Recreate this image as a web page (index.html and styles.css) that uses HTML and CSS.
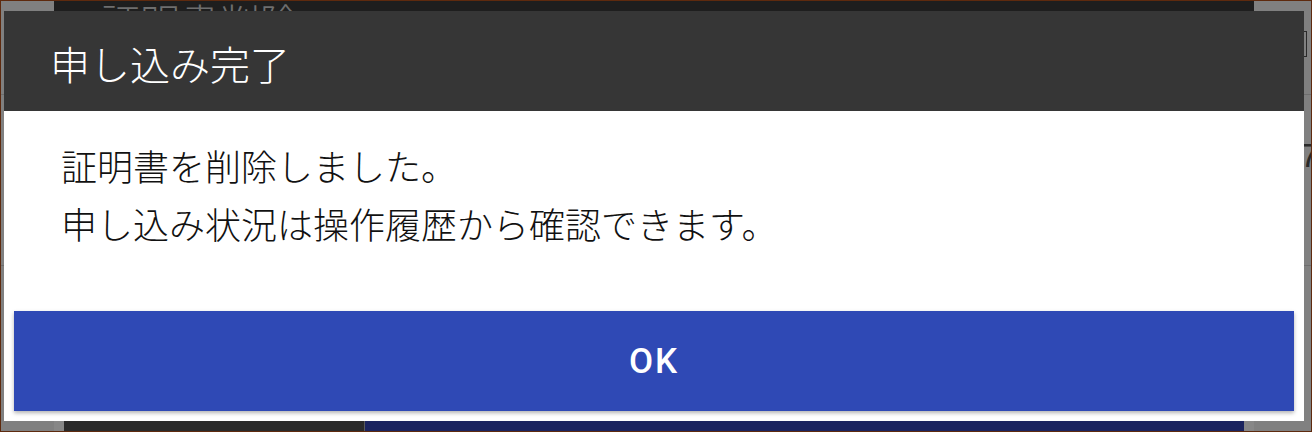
FILE: index.html
```html
<!DOCTYPE html>
<html lang="ja">
<head>
<meta charset="utf-8">
<title>申し込み完了</title>
<link rel="stylesheet" href="styles.css">
</head>
<body>
<div class="screen">
  <div class="under">
    <div class="under-top">
      <div class="gutter-left"></div>
      <div class="under-title"><span>証明書削除</span></div>
      <div class="gutter-right"></div>
    </div>
    <div class="under-mid">
      <div class="row row-a"><div class="frag-box"></div></div>
      <div class="row row-b"><span class="frag-text">7</span></div>
      <div class="row row-c"></div>
    </div>
    <div class="under-bottom">
      <div class="gutter-left"></div>
      <div class="gutter-shade"></div>
      <div class="under-btn-dark"></div>
      <div class="under-btn-sep"></div>
      <div class="under-btn-navy"></div>
      <div class="gutter-shade"></div>
      <div class="gutter-right"></div>
    </div>
  </div>

  <div class="dialog" role="dialog">
    <div class="dialog-header">
      <h1 class="dialog-title">申し込み完了</h1>
    </div>
    <div class="dialog-body">
      <p class="dialog-text">証明書を削除しました。<br>申し込み状況は操作履歴から確認できます。</p>
    </div>
    <div class="dialog-footer">
      <button class="ok-button" type="button">OK</button>
    </div>
  </div>
</div>
</body>
</html>
```

FILE: styles.css
```css
html, body {
  margin: 0;
  padding: 0;
}

body {
  width: 1312px;
  height: 432px;
  overflow: hidden;
  background: #5e2a0e;
  font-family: "Noto Sans CJK JP", "Noto Sans", sans-serif;
}

.screen {
  position: relative;
  margin: 1px;
  width: 1310px;
  height: 430px;
  background: #808080;
  overflow: hidden;
}

/* dimmed page underneath the dialog */
.under {
  display: grid;
  grid-template-rows: 10px 1fr 10px;
  height: 100%;
}

.under-top,
.under-bottom {
  display: flex;
}

.gutter-left {
  width: 53px;
  background: #808080;
}

.gutter-right {
  flex: 1;
  background: #808080;
}

.under-title {
  width: 1200px;
  background: #1e1e1e;
  overflow: hidden;
  padding-left: 46px;
  box-sizing: border-box;
}

.under-title span {
  display: block;
  font-size: 40px;
  line-height: 40px;
  font-weight: 300;
  color: #6e6e6e;
}

.under-mid {
  display: flex;
  flex-direction: column;
}

.row {
  display: flex;
  justify-content: flex-end;
  box-sizing: border-box;
}

.row-a {
  height: 84px;
  border-bottom: 1px solid #6e6e6e;
  padding-top: 20px;
}

.row-b {
  height: 171px;
  border-bottom: 1px solid #6e6e6e;
  padding-top: 43px;
}

.row-c {
  flex: 1;
}

.frag-box {
  width: 8px;
  height: 24px;
  border: 1px solid #2a2a2a;
  margin-right: 4px;
}

.frag-text {
  font-family: "Liberation Sans", sans-serif;
  font-size: 34px;
  line-height: 34px;
  color: #2a2a2a;
  margin-right: -8px;
}

.gutter-shade {
  width: 10px;
  background: #878787;
}

.under-btn-dark {
  width: 300px;
  background: #2a2a2a;
}

.under-btn-sep {
  width: 1px;
  background: #5a5a5a;
}

.under-btn-navy {
  width: 879px;
  background: #1b245f;
}

/* dialog */
.dialog {
  position: absolute;
  left: 3px;
  top: 10px;
  width: 1300px;
  height: 410px;
  background: #ffffff;
  display: flex;
  flex-direction: column;
}

.dialog-header {
  height: 100px;
  background: #363636;
  display: flex;
  align-items: center;
  padding: 4px 0 0 46px;
  box-sizing: border-box;
}

.dialog-title {
  margin: 0;
  font-size: 40px;
  font-weight: 300;
  line-height: 48px;
  color: #ffffff;
}

.dialog-body {
  flex: 1;
  padding: 25px 0 0 57px;
}

.dialog-text {
  margin: 0;
  font-size: 36px;
  font-weight: 300;
  line-height: 58px;
  color: #111111;
}

.dialog-footer {
  padding: 0 10px 10px;
}

.ok-button {
  display: block;
  width: 100%;
  height: 100px;
  border: 0;
  margin: 0;
  background: #2f49b5;
  color: #ffffff;
  font-family: Roboto, "Liberation Sans", sans-serif;
  font-weight: 500;
  font-size: 35px;
  letter-spacing: 2px;
  box-shadow: 0 2px 4px rgba(0, 0, 0, 0.3);
  cursor: pointer;
}
```
